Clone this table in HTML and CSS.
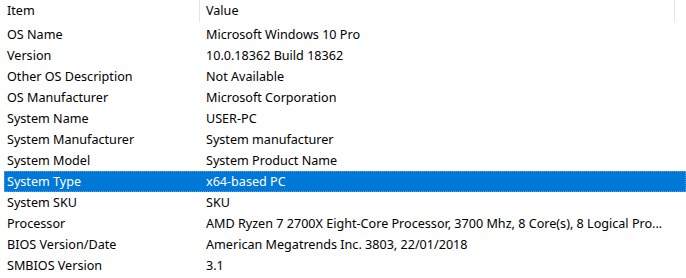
FILE: index.html
```html
<!DOCTYPE html>
<html>
<head>
<meta charset="utf-8">
<link rel="stylesheet" href="styles.css">
</head>
<body>
<div class="list">
  <div class="header">
    <div class="hcell hitem">Item</div>
    <div class="hcell hvalue">Value</div>
    <div class="hcell hrest"></div>
  </div>
  <div class="row"><div class="c1">OS Name</div><div class="c2">Microsoft Windows 10 Pro</div></div>
  <div class="row"><div class="c1">Version</div><div class="c2">10.0.18362 Build 18362</div></div>
  <div class="row"><div class="c1">Other OS Description</div><div class="c2">Not Available</div></div>
  <div class="row"><div class="c1">OS Manufacturer</div><div class="c2">Microsoft Corporation</div></div>
  <div class="row"><div class="c1">System Name</div><div class="c2">USER-PC</div></div>
  <div class="row"><div class="c1">System Manufacturer</div><div class="c2">System manufacturer</div></div>
  <div class="row"><div class="c1">System Model</div><div class="c2">System Product Name</div></div>
  <div class="row selected"><div class="c1">System Type</div><div class="c2">x64-based PC</div></div>
  <div class="row"><div class="c1">System SKU</div><div class="c2">SKU</div></div>
  <div class="row"><div class="c1">Processor</div><div class="c2">AMD Ryzen 7 2700X Eight-Core Processor, 3700 Mhz, 8 Core(s), 8 Logical Pro...</div></div>
  <div class="row"><div class="c1">BIOS Version/Date</div><div class="c2">American Megatrends Inc. 3803, 22/01/2018</div></div>
  <div class="row"><div class="c1">SMBIOS Version</div><div class="c2">3.1</div></div>
</div>
</body>
</html>
```
FILE: styles.css
```css
html, body {
  margin: 0;
  padding: 0;
  background: #ffffff;
}
body {
  font-family: "Noto Sans", "Segoe UI", sans-serif;
  font-size: 12.6px;
  color: #000000;
  overflow: hidden;
}
.list {
  display: flex;
  flex-direction: column;
}
.header {
  display: grid;
  grid-template-columns: 200px 475px 11px;
  height: 24px;
}
.hcell {
  display: flex;
  align-items: center;
  padding-bottom: 2px;
  box-sizing: border-box;
}
.hitem {
  padding-left: 7px;
  border-right: 1px solid #e5e5e5;
  margin: 0 0 2px 0;
}
.hvalue {
  padding-left: 6px;
  border-right: 1px solid #e5e5e5;
  margin-bottom: 2px;
}
.row {
  display: grid;
  grid-template-columns: 202px 469px;
  height: 21px;
  align-items: center;
  margin-left: 4px;
  box-sizing: border-box;
  white-space: nowrap;
}
.c1 {
  padding-left: 3px;
}
.c2 {
  overflow: hidden;
}
.selected {
  background: #0078d7;
  color: #ffffff;
  outline: 1px dotted #5a9fe0;
  outline-offset: -1px;
}
```
